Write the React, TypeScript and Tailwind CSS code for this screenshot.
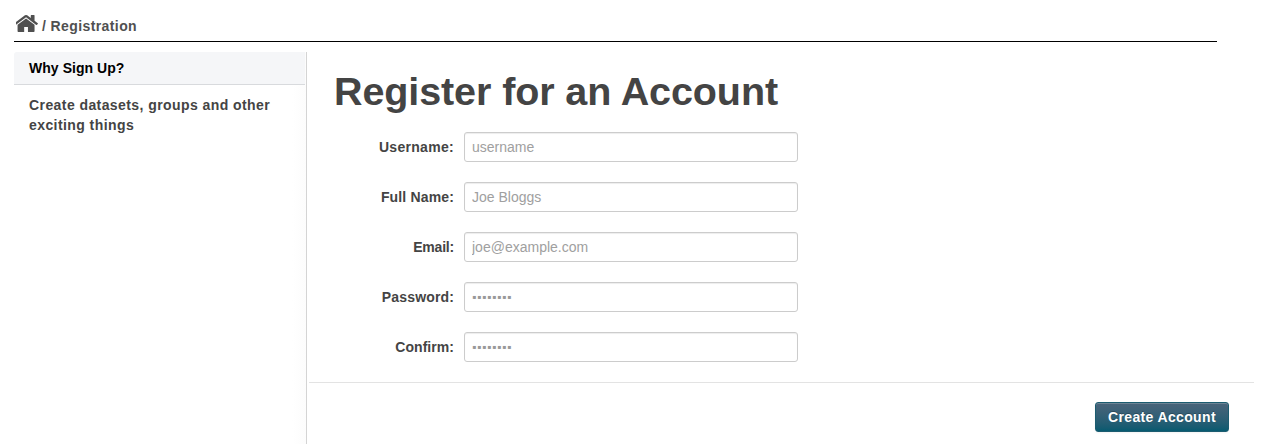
const fields = [
  { id: "username", label: "Username:", placeholder: "username", secret: false, tracking: "tracking-[0.3px]" },
  { id: "fullname", label: "Full Name:", placeholder: "Joe Bloggs", secret: false, tracking: "tracking-[0.15px]" },
  { id: "email", label: "Email:", placeholder: "joe@example.com", secret: false, tracking: "tracking-[-0.2px]" },
  { id: "password", label: "Password:", placeholder: "▪▪▪▪▪▪▪▪", secret: true, tracking: "tracking-[0.15px]" },
  { id: "confirm", label: "Confirm:", placeholder: "▪▪▪▪▪▪▪▪", secret: true, tracking: "tracking-[0.05px]" },
];

function HomeIcon() {
  return (
    <svg className="h-[17px] w-[22px]" viewBox="150 253 1492 1283" preserveAspectRatio="none" fill="currentColor" aria-hidden="true">
      <path d="M1408 992v480q0 26-19 45t-45 19h-384v-384h-256v384h-384q-26 0-45-19t-19-45v-480q0-1 .5-3t.5-3l575-474 575 474q1 2 1 6zm223-69l-62 74q-8 9-21 11h-3q-13 0-21-7l-692-577-692 577q-12 8-24 7-13-2-21-11l-62-74q-8-10-7-23.5t11-21.5l719-599q32-26 76-26t76 26l244 204v-195q0-14 9-23t23-9h192q14 0 23 9t9 23v408l219 182q10 8 11 21.5t-7 23.5z" />
    </svg>
  );
}

export default function App() {
  return (
    <div className="flex h-[444px] flex-col overflow-hidden bg-white pl-[14px] font-['Liberation_Sans',Arial,sans-serif] text-[14px] leading-5 font-bold text-[#444]">
      <nav className="mr-[47px] flex h-[42px] shrink-0 border-b border-black pt-[15px] pl-[2px] text-[#505050]">
        <HomeIcon />
        <span className="mt-px ml-1 tracking-[0.4px]">/&nbsp;Registration</span>
      </nav>
      <div className="mt-[10px] flex min-h-0 flex-1">
        <aside className="w-[293px] shrink-0 border-r border-[#d4d4d4] bg-[linear-gradient(to_right,transparent_278px,#fcfcfc)] pr-px">
          <h2 className="h-[33px] rounded-tl-[3px] border-b border-[#d8dadd] bg-[#f5f6f8] pt-[6px] pl-[15px] tracking-[0.05px] text-black">Why Sign Up?</h2>
          <p className="pt-[10px] pl-[15px] tracking-[0.42px]">
            Create datasets, groups and other
            <br />
            exciting things
          </p>
        </aside>
        <main className="flex min-w-0 flex-1 flex-col pl-[2px]">
          <h1 className="h-[80px] pt-5 pl-[25px] text-[39.5px] leading-[39px] font-bold tracking-[-0.1px]">Register for an Account</h1>
          <form className="flex flex-col gap-5">
            {fields.map((f) => (
              <div key={f.id} className="flex h-[30px] items-center">
                <label htmlFor={f.id} className={`w-[145px] text-right ${f.tracking}`}>{f.label}</label>
                <input
                  id={f.id}
                  type="text"
                  placeholder={f.placeholder}
                  className={
                    f.secret
                      ? "ml-[10px] h-[30px] w-[334px] rounded-[3px] border border-[#ccc] bg-white px-[7px] text-[12px] font-normal tracking-[0.75px] shadow-[inset_0_1px_1px_rgba(0,0,0,0.075)] placeholder:text-[#999]"
                      : "ml-[10px] h-[30px] w-[334px] rounded-[3px] border border-[#ccc] bg-white px-[7px] font-normal shadow-[inset_0_1px_1px_rgba(0,0,0,0.075)] placeholder:text-[#a0a0a0]"
                  }
                />
              </div>
            ))}
          </form>
          <div className="mt-5 mr-[10px] flex justify-end border-t border-[#e3e3e3] pt-[19px] pr-[25px]">
            <button className="h-[30px] w-[134px] rounded-[3px] border border-[#1b5c70] bg-linear-to-b from-[#49647a] to-[#055a70] tracking-[0.35px] whitespace-nowrap text-white shadow-[inset_0_1px_0_rgba(255,255,255,0.2),0_1px_2px_rgba(0,0,0,0.05)] text-shadow-[0_-1px_0_rgba(0,0,0,0.25)]">Create Account</button>
          </div>
        </main>
      </div>
    </div>
  );
}
